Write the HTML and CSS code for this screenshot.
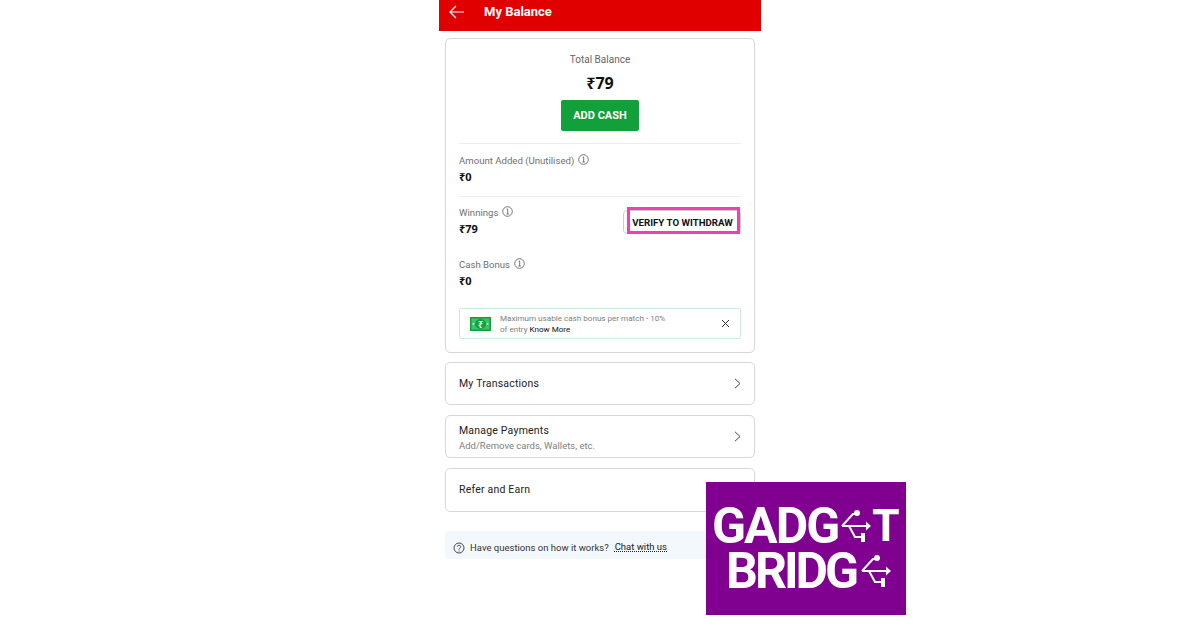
FILE: index.html
```html
<!DOCTYPE html>
<html lang="en">
<head>
<meta charset="utf-8">
<title>My Balance</title>
<link rel="stylesheet" href="styles.css">
</head>
<body>
<main class="phone">
  <header class="topbar">
    <svg class="back" width="16" height="14" viewBox="0 0 16 14"><path d="M15 7H1M7 1 1 7l6 6" fill="none" stroke="#fff" stroke-width="1.2"/></svg>
    <span class="topbar-title">My Balance</span>
  </header>
  <div class="content">
    <section class="card balance">
      <div class="total">
        <div class="total-label">Total Balance</div>
        <div class="total-value">₹79</div>
        <div class="add-cash">ADD CASH</div>
      </div>
      <div class="row row-amount">
        <div class="row-label">Amount Added (Unutilised)
          <svg class="info" width="11" height="11" viewBox="0 0 11 11"><circle cx="5.5" cy="5.5" r="4.8" fill="none" stroke="#555" stroke-width=".8"/><path d="M4.6 3h1.1v5M4.4 8h2.4" fill="none" stroke="#555" stroke-width=".8"/></svg>
        </div>
        <div class="row-value">₹0</div>
      </div>
      <div class="row row-winnings">
        <div class="row-main">
          <div class="row-label">Winnings
            <svg class="info" width="11" height="11" viewBox="0 0 11 11"><circle cx="5.5" cy="5.5" r="4.8" fill="none" stroke="#555" stroke-width=".8"/><path d="M4.6 3h1.1v5M4.4 8h2.4" fill="none" stroke="#555" stroke-width=".8"/></svg>
          </div>
          <div class="row-value">₹79</div>
        </div>
        <div class="verify"><span class="verify-text">VERIFY TO WITHDRAW</span><span class="highlight"></span></div>
      </div>
      <div class="row row-bonus">
        <div class="row-label">Cash Bonus
          <svg class="info" width="11" height="11" viewBox="0 0 11 11"><circle cx="5.5" cy="5.5" r="4.8" fill="none" stroke="#555" stroke-width=".8"/><path d="M4.6 3h1.1v5M4.4 8h2.4" fill="none" stroke="#555" stroke-width=".8"/></svg>
        </div>
        <div class="row-value">₹0</div>
      </div>
      <div class="notice">
        <svg class="cash-icon" width="21" height="14" viewBox="0 0 21 14"><rect width="21" height="14" fill="#12a03a"/><rect x="1.500" y="1.500" width="18" height="11" fill="#3cc36a"/><ellipse cx="10.500" cy="7" rx="5.500" ry="5" fill="#12a03a"/><circle cx="3.500" cy="7" r="1" fill="#d6f5df"/><circle cx="17.500" cy="7" r="1" fill="#d6f5df"/><text class="cash-glyph" x="10.500" y="10.500" text-anchor="middle">₹</text></svg>
        <p class="notice-text">Maximum usable cash bonus per match - 10%<br>of entry <span class="know">Know More</span></p>
        <svg class="close" width="9" height="9" viewBox="0 0 9 9"><path d="M1 1l7 7M8 1 1 8" stroke="#333" stroke-width="1"/></svg>
      </div>
    </section>
    <section class="card link link-single">
      <div class="link-title">My Transactions</div>
      <svg class="chev" width="7" height="11" viewBox="0 0 7 11"><path d="M1 .8 6 5.500 1 10.200" fill="none" stroke="#444" stroke-width="1"/></svg>
    </section>
    <section class="card link link-double">
      <div class="link-text">
        <div class="link-title">Manage Payments</div>
        <div class="link-sub">Add/Remove cards, Wallets, etc.</div>
      </div>
      <svg class="chev" width="7" height="11" viewBox="0 0 7 11"><path d="M1 .8 6 5.500 1 10.200" fill="none" stroke="#444" stroke-width="1"/></svg>
    </section>
    <section class="card link link-refer">
      <div class="link-title">Refer and Earn</div>
    </section>
    <div class="help">
      <svg width="12" height="12" viewBox="0 0 12 12"><circle cx="6" cy="6" r="5" fill="none" stroke="#333" stroke-width=".9"/><path d="M4.300 4.700C4.400 2.800 7.800 2.900 7.700 4.800 7.600 6 6 6 6 7.600M6 8.600v1" fill="none" stroke="#333" stroke-width=".9"/></svg>
      <span class="help-text">Have questions on how it works?</span>
      <span class="help-link">Chat with us</span>
    </div>
  </div>
</main>
<aside class="logo">
  <div class="logo-line logo-line-one">
    <span class="logo-word">GADG</span>
    <svg class="usb" width="30" height="36" viewBox="0 0 30 36"><path d="M1 18 12 6h3M1 18h26M8 18l6 11h7" fill="none" stroke="#fff" stroke-width="2"/><circle cx="16" cy="5" r="3" fill="#fff"/><path d="M25 13.500 30 18l-5 4.500z" fill="#fff"/><rect x="20" y="25" width="4" height="9" fill="#fff"/></svg>
    <span class="logo-word logo-t">T</span>
  </div>
  <div class="logo-line logo-line-two">
    <span class="logo-word">BRIDG</span>
    <svg class="usb" width="30" height="36" viewBox="0 0 30 36"><path d="M1 18 12 6h3M1 18h26M8 18l6 11h7" fill="none" stroke="#fff" stroke-width="2"/><circle cx="16" cy="5" r="3" fill="#fff"/><path d="M25 13.500 30 18l-5 4.500z" fill="#fff"/><rect x="20" y="25" width="4" height="9" fill="#fff"/></svg>
  </div>
</aside>
</body>
</html>
```
FILE: styles.css
```css
* { box-sizing: border-box; }
html, body { margin: 0; height: 100%; }
body {
  background: #fff;
  font-family: Roboto, "Noto Sans", sans-serif;
  color: #111;
  overflow: hidden;
  position: relative;
}
.phone { width: 322px; margin-left: 439px; }
.topbar {
  height: 31px;
  background: #e10000;
  display: flex;
  align-items: center;
  padding: 0 0 8px 10px;
  color: #fff;
}
.back { flex: none; }
.topbar-title { margin-left: 19px; font-size: 13px; font-weight: 700; }
.content { padding: 7px 6px 0; display: flex; flex-direction: column; }
.card {
  border: 1px solid #d8d8d8;
  border-radius: 5px;
  background: #fff;
}
.balance { height: 315px; padding: 0 13px; }
.total {
  height: 105px;
  padding-top: 14px;
  border-bottom: 1px solid #eee;
  display: flex;
  flex-direction: column;
  align-items: center;
}
.total-label { font-size: 10px; line-height: 13px; color: #666; }
.total-value { margin-top: 7px; font-size: 16px; line-height: 20px; font-weight: 700; color: #111; font-family: "Noto Sans", Roboto, sans-serif; }
.add-cash {
  margin-top: 7px;
  width: 78px;
  height: 31px;
  background: #12a03a;
  border-radius: 2px;
  color: #fff;
  font-size: 11px;
  font-weight: 700;
  display: flex;
  align-items: center;
  justify-content: center;
}
.row-label { font-size: 9.600px; line-height: 13px; color: #707070; display: flex; align-items: flex-start; gap: 4px; }
.info { flex: none; }
.row-value { margin-top: 3px; font-size: 11px; line-height: 14px; font-weight: 700; color: #111; font-family: "Noto Sans", Roboto, sans-serif; }
.row-amount { height: 53px; padding-top: 10px; border-bottom: 1px solid #eee; }
.row-winnings { height: 51px; padding-top: 9px; display: flex; justify-content: space-between; align-items: flex-start; }
.verify {
  position: relative;
  width: 118px;
  height: 24px;
  margin-top: 4px;
  border: 1px solid #ccc;
  border-radius: 4px;
  display: flex;
  align-items: center;
  justify-content: center;
}
.verify-text { font-size: 9.700px; font-weight: 700; color: #111; white-space: nowrap; padding-left: 1px; }
.highlight {
  position: absolute;
  left: 3px;
  top: -4px;
  width: 113px;
  height: 27px;
  border: 3px solid #f040b0;
}
.row-bonus { height: 60px; padding-top: 10px; }
.notice {
  height: 31px;
  border: 1px solid #cdeedb;
  border-radius: 2px;
  display: flex;
  align-items: center;
  padding: 0 10px;
}
.cash-icon { flex: none; }
.cash-glyph { font-size: 10px; font-weight: 700; fill: #d6f5df; font-family: "Noto Sans", sans-serif; }
.notice-text { margin: 0 0 0 9px; flex: 1; font-size: 8.100px; line-height: 10.500px; color: #808080; }
.know { color: #111; }
.close { flex: none; }
.link { display: flex; align-items: center; justify-content: space-between; padding: 0 13px; margin-top: 10px; }
.link-single { height: 43px; margin-top: 9px; }
.link-double { height: 43px; }
.link-refer { height: 44px; padding-bottom: 2px; }
.link-text { margin-top: 2px; }
.link-title { font-size: 10.500px; line-height: 13px; color: #222; letter-spacing: .2px; }
.link-sub { font-size: 9.500px; line-height: 12px; color: #808080; margin-top: 3px; }
.chev { flex: none; }
.help {
  margin-top: 19px;
  height: 28px;
  background: #f3f8fd;
  border-radius: 3px;
  display: flex;
  align-items: center;
  padding: 5px 0 0 8px;
  font-size: 9.500px;
  color: #333;
}
.help-text { margin-left: 5px; }
.help-link { margin-left: 6px; margin-top: -3px; text-decoration: underline dotted; color: #222; }
.logo {
  position: absolute;
  left: 706px;
  top: 482px;
  width: 200px;
  height: 133px;
  background: #80008f;
  color: #fff;
  font-family: Roboto, sans-serif;
  font-weight: 700;
  font-size: 50px;
}
.logo-line { position: absolute; display: flex; align-items: center; height: 36px; line-height: 36px; }
.logo-word { letter-spacing: -2px; }
.logo-t { font-size: 44px; margin-left: 1px; }
.usb { flex: none; margin-left: 3px; }
.logo-line-one { left: 6px; top: 26px; }
.logo-line-two { left: 20px; top: 71px; }
.logo-line-two .logo-word { letter-spacing: -3px; }
.logo-line-two .usb { margin-left: 5px; }
```
